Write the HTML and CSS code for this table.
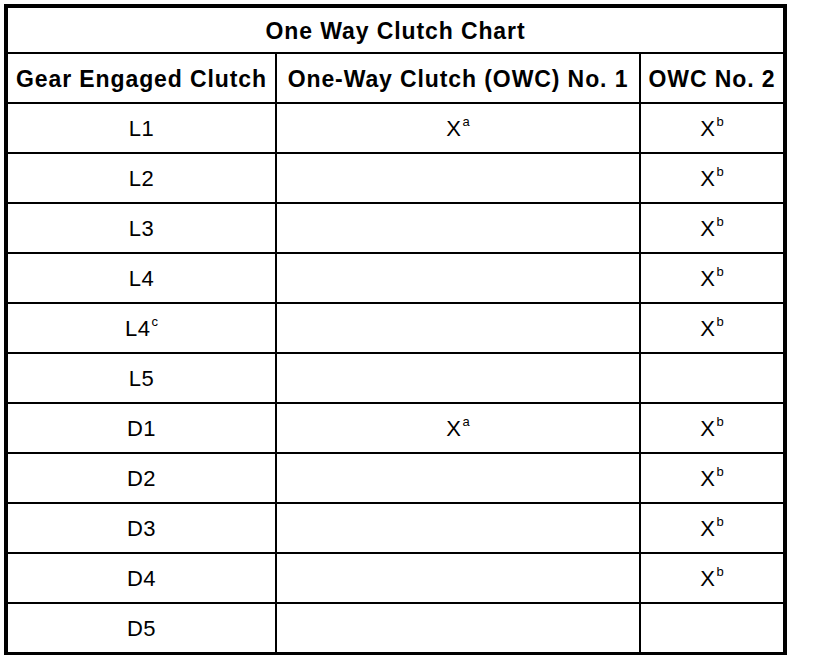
FILE: index.html
```html
<!DOCTYPE html>
<html lang="en">
<head>
<meta charset="utf-8">
<title>One Way Clutch Chart</title>
<link rel="stylesheet" href="styles.css">
</head>
<body>
<div class="chart">
  <div class="cell title"><span>One Way Clutch Chart</span></div>
  <div class="cell head"><span>Gear Engaged Clutch</span></div>
  <div class="cell head"><span>One-Way Clutch (OWC) No. 1</span></div>
  <div class="cell head"><span>OWC No. 2</span></div>

  <div class="cell"><span>L1</span></div>
  <div class="cell"><span>X<sup>a</sup></span></div>
  <div class="cell"><span>X<sup>b</sup></span></div>

  <div class="cell"><span>L2</span></div>
  <div class="cell"></div>
  <div class="cell"><span>X<sup>b</sup></span></div>

  <div class="cell"><span>L3</span></div>
  <div class="cell"></div>
  <div class="cell"><span>X<sup>b</sup></span></div>

  <div class="cell"><span>L4</span></div>
  <div class="cell"></div>
  <div class="cell"><span>X<sup>b</sup></span></div>

  <div class="cell"><span>L4<sup>c</sup></span></div>
  <div class="cell"></div>
  <div class="cell"><span>X<sup>b</sup></span></div>

  <div class="cell"><span>L5</span></div>
  <div class="cell"></div>
  <div class="cell"></div>

  <div class="cell"><span>D1</span></div>
  <div class="cell"><span>X<sup>a</sup></span></div>
  <div class="cell"><span>X<sup>b</sup></span></div>

  <div class="cell"><span>D2</span></div>
  <div class="cell"></div>
  <div class="cell"><span>X<sup>b</sup></span></div>

  <div class="cell"><span>D3</span></div>
  <div class="cell"></div>
  <div class="cell"><span>X<sup>b</sup></span></div>

  <div class="cell"><span>D4</span></div>
  <div class="cell"></div>
  <div class="cell"><span>X<sup>b</sup></span></div>

  <div class="cell"><span>D5</span></div>
  <div class="cell"></div>
  <div class="cell"></div>
</div>
</body>
</html>
```

FILE: styles.css
```css
html, body {
  background: #fff;
}
body {
  margin: 4px;
  font-family: "Liberation Sans", Arial, sans-serif;
  color: #000;
}
.chart {
  width: 775px;
  display: grid;
  grid-template-columns: 267px 362px 142px;
  grid-template-rows: 44px repeat(12, 48px);
  gap: 2px;
  background: #000;
  border: 4px solid #000;
  border-bottom-width: 3px;
}
.cell {
  background: #fff;
  display: flex;
  align-items: center;
  justify-content: center;
  font-size: 22px;
  letter-spacing: 0.5px;
  line-height: 1;
  padding-top: 2px;
}
.title {
  grid-column: 1 / -1;
  font-weight: bold;
  font-size: 23px;
  letter-spacing: 0.9px;
}
.head {
  font-weight: bold;
  font-size: 23px;
  letter-spacing: 0.9px;
}
.cell sup {
  font-size: 13px;
  line-height: 0;
  vertical-align: 10px;
  letter-spacing: 0;
  margin-left: 1px;
}
```
